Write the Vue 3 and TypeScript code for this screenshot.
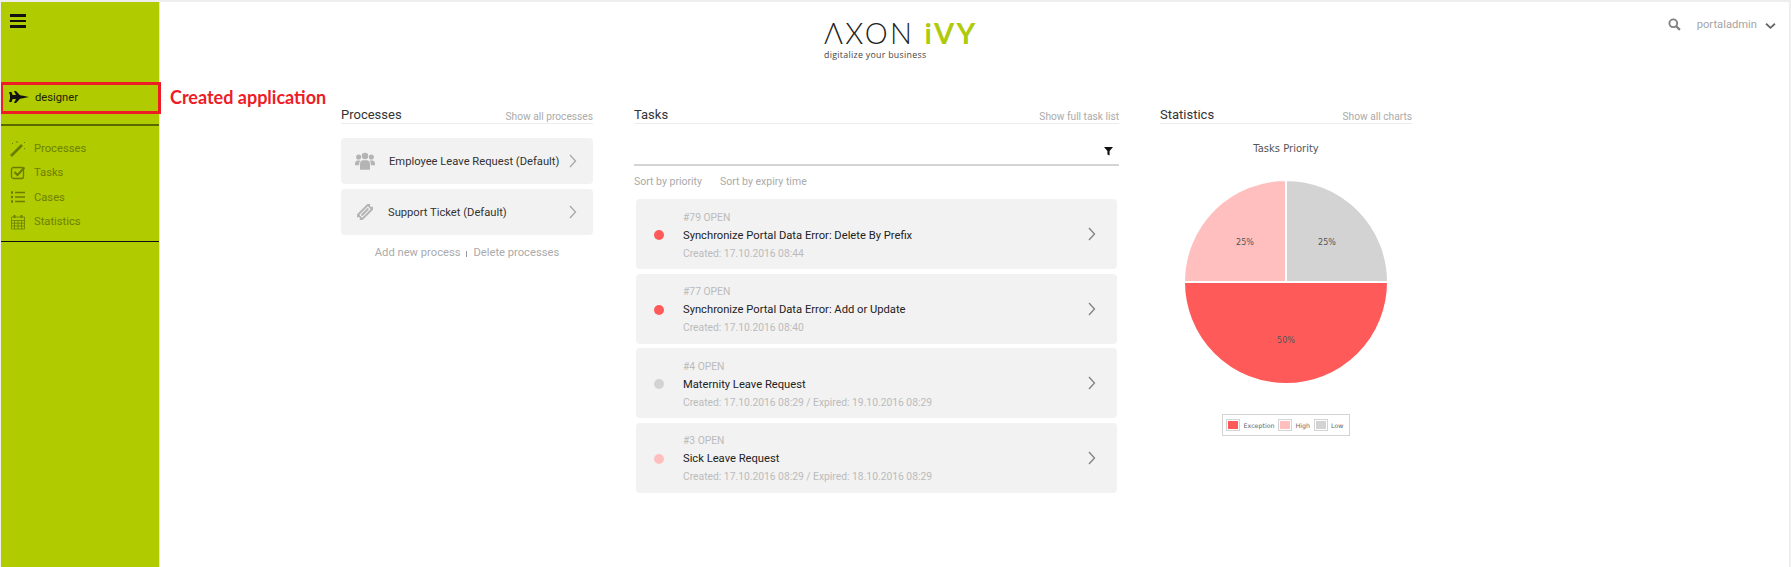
<script setup lang="ts">
interface ProcessItem {
  name: string
  icon: 'users' | 'ticket'
}

interface TaskItem {
  id: number
  name: string
  dates: string
  priority: string
}

const menu = ['Processes', 'Tasks', 'Cases', 'Statistics']

const processes: ProcessItem[] = [
  { name: 'Employee Leave Request (Default)', icon: 'users' },
  { name: 'Support Ticket (Default)', icon: 'ticket' },
]

const tasks: TaskItem[] = [
  { id: 79, name: 'Synchronize Portal Data Error: Delete By Prefix', dates: 'Created: 17.10.2016 08:44', priority: '#ff5a5a' },
  { id: 77, name: 'Synchronize Portal Data Error: Add or Update', dates: 'Created: 17.10.2016 08:40', priority: '#ff5a5a' },
  { id: 4, name: 'Maternity Leave Request', dates: 'Created: 17.10.2016 08:29 / Expired: 19.10.2016 08:29', priority: '#d3d3d3' },
  { id: 3, name: 'Sick Leave Request', dates: 'Created: 17.10.2016 08:29 / Expired: 18.10.2016 08:29', priority: '#ffbfbf' },
]

const legend = [
  { label: 'Exception', color: '#ff5a5a' },
  { label: 'High', color: '#ffbfbf' },
  { label: 'Low', color: '#d3d3d3' },
]
</script>

<template>
  <div class="page">
    <aside class="sidebar">
      <div class="burger"><span></span><span></span><span></span></div>
      <div class="app-row">
        <svg class="jet" viewBox="0 0 20 12" width="20" height="12">
          <path d="M0 1h2.500l1 3H7L5 0h2l4 4.300 3 .4 6 1.300-6 1.300-3 .4L7 12H5l2-4H3.500l-1 3H0l1-3.200V4.200z" fill="#111" />
        </svg>
        <span>designer</span>
      </div>
      <nav class="menu">
        <a v-for="(item, i) in menu" :key="item" class="menu-item">
          <svg v-if="i === 0" viewBox="0 0 16 16" width="16" height="16">
            <path d="M1 15 12 4" stroke="#6b7d00" stroke-width="2.600" fill="none" />
            <path d="M2 2l1 1M7 0v2M14 7l1 1M14 2l1-1" stroke="#6b7d00" stroke-width="1" fill="none" />
          </svg>
          <svg v-else-if="i === 1" viewBox="0 0 16 16" width="16" height="16">
            <rect x="1.500" y="2.500" width="12" height="11" rx="2" stroke="#6b7d00" stroke-width="1.300" fill="none" />
            <path d="M4.500 7l3 3 7-7.500" stroke="#6b7d00" stroke-width="2" fill="none" />
          </svg>
          <svg v-else-if="i === 2" viewBox="0 0 16 16" width="16" height="16">
            <path d="M1 3.500h2M1 8h2M1 12.500h2" stroke="#6b7d00" stroke-width="2.400" fill="none" />
            <path d="M5 3.500h10M5 8h10M5 12.500h10" stroke="#6b7d00" stroke-width="1.700" fill="none" />
          </svg>
          <svg v-else viewBox="0 0 16 16" width="16" height="16">
            <path d="M1.500 3h13v12h-13zM1.500 6.500h13M1.500 9.200h13M1.500 12h13M4.500 6.500V15M8 6.500V15M11.500 6.500V15" stroke="#6b7d00" stroke-width=".8" fill="none" />
            <path d="M4.500 1v3M11.500 1v3" stroke="#6b7d00" stroke-width="1.800" fill="none" />
          </svg>
          <span>{{ item }}</span>
        </a>
      </nav>
    </aside>

    <main class="main">
      <header class="topbar">
        <div class="logo">
          <div class="logo-name">ΛXON <b>iVY</b></div>
          <div class="logo-tag">digitalize your business</div>
        </div>
        <div class="user">
          <svg viewBox="0 0 14 14" width="13" height="13">
            <circle cx="5.700" cy="5.700" r="4.200" stroke="#808080" stroke-width="2" fill="none" />
            <path d="M8.800 8.800l4 4" stroke="#808080" stroke-width="2.400" />
          </svg>
          <span class="user-name">portaladmin</span>
          <svg viewBox="0 0 12 8" width="11" height="8">
            <path d="M1.200 1.500 6 6l4.800-4.500" stroke="#666" stroke-width="2" fill="none" />
          </svg>
        </div>
      </header>

      <div class="columns">
        <section class="col col-side">
          <div class="col-head"><h2>Processes</h2><a>Show all processes</a></div>
          <div class="process-list">
            <div v-for="p in processes" :key="p.name" class="process">
              <svg v-if="p.icon === 'users'" class="process-icon" viewBox="0 0 22 20" width="20" height="19">
                <g fill="#b4b4b4">
                  <circle cx="4" cy="5" r="2.800" /><circle cx="18" cy="5" r="2.800" /><circle cx="11" cy="4" r="3.600" />
                  <path d="M0 14c0-4 1-5 3.500-5H6c-1 1-1.500 3-1.500 5zM22 14c0-4-1-5-3.500-5H16c1 1 1.500 3 1.500 5zM5.500 19v-6c0-3 1.500-4.500 3.500-4.500h4c2 0 3.500 1.500 3.500 4.500v6z" />
                </g>
              </svg>
              <svg v-else class="process-icon ticket" viewBox="0 0 20 20" width="16" height="16">
                <g transform="rotate(-45 10 10)">
                  <path d="M-1.500 5h23v3.200a1.800 1.800 0 0 0 0 3.600V15h-23v-3.200a1.800 1.800 0 0 0 0-3.600zM2.500 7.500v5h15v-5z" fill="#b4b4b4" fill-rule="evenodd" />
                  <rect x="4" y="8.700" width="12" height="2.600" fill="#b4b4b4" />
                </g>
              </svg>
              <span class="process-name">{{ p.name }}</span>
              <svg class="chevron" viewBox="0 0 8 14" width="8" height="14">
                <path d="M1 1l5.500 6L1 13" stroke="#a8a8a8" stroke-width="1.300" fill="none" />
              </svg>
            </div>
          </div>
          <div class="process-actions">
            <a>Add new process</a><i></i><a>Delete processes</a>
          </div>
        </section>

        <section class="col col-tasks">
          <div class="col-head"><h2>Tasks</h2><a>Show full task list</a></div>
          <div class="filter-bar">
            <svg viewBox="0 0 10 10" width="9" height="10">
              <path d="M0 .5h10L6.200 5v5L3.800 8.800V5z" fill="#111" />
            </svg>
          </div>
          <div class="sorts"><a>Sort by priority</a><a>Sort by expiry time</a></div>
          <div class="task-list">
            <div v-for="t in tasks" :key="t.id" class="task">
              <span class="dot" :style="{ background: t.priority }"></span>
              <div class="task-body">
                <div class="task-state">#{{ t.id }} OPEN</div>
                <div class="task-name">{{ t.name }}</div>
                <div class="task-dates">{{ t.dates }}</div>
              </div>
              <svg class="chevron" viewBox="0 0 8 14" width="8" height="14">
                <path d="M1 1l5.500 6L1 13" stroke="#808080" stroke-width="1.300" fill="none" />
              </svg>
            </div>
          </div>
        </section>

        <section class="col col-side">
          <div class="col-head"><h2>Statistics</h2><a>Show all charts</a></div>
          <div class="chart-title">Tasks Priority</div>
          <svg class="pie" viewBox="0 0 206 206" width="206" height="206">
            <path d="M103 103V1a102 102 0 0 1 102 102z" fill="#d3d3d3" stroke="#fff" stroke-width="2" />
            <path d="M103 103H1A102 102 0 0 1 103 1z" fill="#ffbfbf" stroke="#fff" stroke-width="2" />
            <path d="M103 103h102A102 102 0 0 1 1 103z" fill="#ff5a5a" stroke="#fff" stroke-width="2" />
            <g class="pie-labels">
              <text x="62" y="66">25%</text>
              <text x="144" y="66">25%</text>
              <text x="103" y="164">50%</text>
            </g>
          </svg>
          <div class="legend">
            <template v-for="l in legend" :key="l.label">
              <span class="swatch"><i :style="{ background: l.color }"></i></span>
              <span class="legend-label">{{ l.label }}</span>
            </template>
          </div>
        </section>
      </div>
    </main>

    <!-- screenshot annotation laid over the page -->
    <div class="mark"></div>
    <div class="mark-label">Created application</div>
  </div>
</template>

<style scoped>
.page {
  position: relative;
  display: flex;
  height: 565px;
  margin-top: 2px;
  margin-right: 2px;
  margin-left: 1px;
  background: #fff;
  font-family: Roboto, "Liberation Sans", sans-serif;
  overflow: hidden;
}

.sidebar {
  flex: 0 0 158px;
  background: #b0cb00;
  border-right: 1px solid #e4e4e4;
}

.burger {
  display: flex;
  flex-direction: column;
  gap: 3px;
  width: 16px;
  margin: 12px 0 0 9px;
}

.burger span {
  height: 2.500px;
  background: #111;
}

.app-row {
  display: flex;
  align-items: center;
  gap: 6px;
  height: 31px;
  margin-top: 54px;
  padding-left: 8px;
  font-size: 11.200px;
  color: #1d2200;
}

.menu {
  margin-top: 11px;
  padding: 11px 0 7.500px;
  border-top: 2px solid #5b6a00;
  border-bottom: 1px solid #111;
}

.menu-item {
  display: flex;
  align-items: center;
  gap: 8px;
  height: 24.300px;
  padding-left: 9px;
  font-size: 11.200px;
  color: #6f8100;
}

.main {
  flex: 1;
  min-width: 0;
}

.topbar {
  display: flex;
  justify-content: space-between;
  box-sizing: border-box;
  height: 92px;
  padding: 16px 13px 0 664px;
}

.logo-name {
  font-family: Lato, "Open Sans", sans-serif;
  font-size: 29px;
  font-weight: 300;
  line-height: 30px;
  letter-spacing: 2.300px;
  color: #222;
  white-space: nowrap;
}

.logo-name b {
  font-weight: 700;
  color: #afca0b;
}

.logo-tag {
  margin-top: 1px;
  font-family: "Open Sans", sans-serif;
  font-size: 8.800px;
  letter-spacing: .3px;
  color: #444;
}

.user {
  display: flex;
  align-items: flex-start;
  gap: 10px;
  font-size: 11.200px;
  color: #a5a5a5;
}

.user-name {
  margin-left: 6px;
  line-height: 14px;
}

.user svg:last-child {
  margin: 4px 0 0 -2px;
}

.columns {
  display: flex;
  gap: 41px;
  padding-left: 181px;
}

.col {
  min-width: 0;
}

.col-side {
  flex: 0 0 252px;
}

.col-tasks {
  flex: 0 0 485px;
}

.col-head {
  display: flex;
  justify-content: space-between;
  align-items: flex-end;
  box-sizing: border-box;
  height: 30px;
  padding-bottom: 1px;
  border-bottom: 1px solid #ececec;
}

.col-head h2 {
  margin: 0;
  font-size: 13px;
  font-weight: 400;
  color: #333;
}

.col-head a {
  font-size: 10.200px;
  color: #aaa;
}

.process-list {
  display: flex;
  flex-direction: column;
  gap: 5px;
  margin-top: 14px;
}

.process {
  display: flex;
  align-items: center;
  height: 46px;
  padding-left: 14px;
  padding-right: 16px;
  background: #f2f2f2;
  border-radius: 4px;
}

.process-icon {
  flex: none;
}

.process-icon.ticket {
  margin: 0 1px 0 2px;
}

.process-name {
  flex: 1;
  margin-left: 14px;
  font-size: 11.200px;
  color: #333;
  white-space: nowrap;
}

.process-actions {
  display: flex;
  justify-content: center;
  align-items: center;
  gap: 6px;
  margin-top: 11px;
  font-size: 11.200px;
  color: #aaa;
}

.process-actions i {
  width: 1px;
  height: 6px;
  margin-top: 2px;
  background: #999;
}

.filter-bar {
  display: flex;
  justify-content: flex-end;
  align-items: flex-end;
  box-sizing: border-box;
  height: 42px;
  padding: 0 6px 8px 0;
  border-bottom: 2px solid #d4d4d4;
}

.sorts {
  display: flex;
  gap: 18px;
  margin-top: 9px;
  font-size: 10.500px;
  line-height: 13px;
  color: #aaa;
}

.task-list {
  display: flex;
  flex-direction: column;
  gap: 4.500px;
  margin: 11px 2px 0;
}

.task {
  display: flex;
  align-items: center;
  height: 70px;
  padding: 0 21px 0 18px;
  background: #f2f2f2;
  border-radius: 4px;
}

.dot {
  flex: none;
  width: 10px;
  height: 10px;
  margin: 2px 19px 0 0;
  border-radius: 50%;
}

.task-body {
  flex: 1;
  padding-top: 3px;
}

.task-state,
.task-dates {
  font-size: 10.300px;
  line-height: 18px;
  color: #bbb;
}

.task-name {
  font-size: 11.200px;
  line-height: 18px;
  color: #222;
}

.chart-title {
  margin-top: 18px;
  text-align: center;
  font-family: "DejaVu Sans", sans-serif;
  font-size: 10px;
  line-height: 14px;
  color: #555;
}

.pie {
  display: block;
  margin: 23px auto 0;
}

.pie-labels text {
  font-family: "DejaVu Sans", sans-serif;
  font-size: 8px;
  fill: #555;
  text-anchor: middle;
}

.legend {
  display: flex;
  align-items: center;
  width: fit-content;
  height: 20px;
  margin: 29px auto 0;
  padding: 0 2px 0 3px;
  border: 1px solid #d4d4d4;
  font-family: "DejaVu Sans", sans-serif;
  font-size: 6.300px;
  color: #666;
}

.swatch {
  padding: 1px;
  border: 1px solid #d4d4d4;
}

.swatch i {
  display: block;
  width: 10px;
  height: 8px;
}

.legend-label {
  margin: 0 3.500px;
}

.mark {
  position: absolute;
  left: -1px;
  top: 80px;
  width: 161px;
  height: 32px;
  box-sizing: border-box;
  border: 3px solid #ee1c25;
}

.mark-label {
  position: absolute;
  left: 169px;
  top: 85px;
  font-family: Lato, "Open Sans", sans-serif;
  font-size: 18px;
  font-weight: 700;
  line-height: 20px;
  color: #ee1c25;
}
</style>

<style>
html,
body {
  margin: 0;
  background: #eeeeee;
}
</style>
